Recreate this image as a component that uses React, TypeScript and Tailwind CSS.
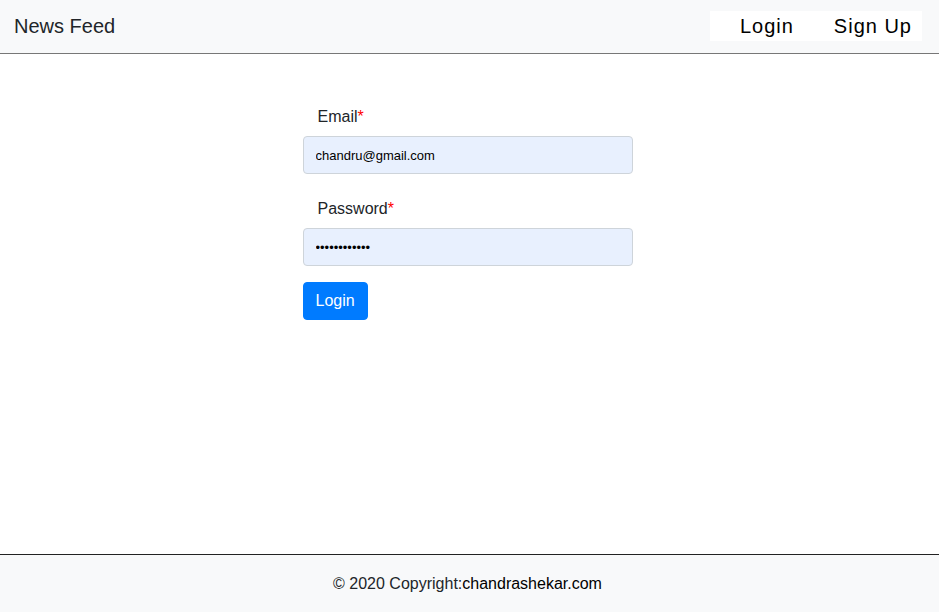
import React from 'react';

const App: React.FC = () => {
  return (
    <div className="min-h-screen flex flex-col bg-white text-[#212529]" style={{ fontFamily: '"Liberation Sans", Arial, sans-serif' }}>
      <nav className="h-[54px] bg-[#f8f9fa] border-b border-[#777777] flex items-center justify-between pl-[14px] pr-[17px] pb-[2px]">
        <span className="text-[20px] leading-[30px]">News Feed</span>
        <div className="bg-white h-[30px] flex items-center pl-[30px] pr-[10px] gap-[40px] text-[20px] tracking-[1px] text-black">
          <a href="#">Login</a>
          <a href="#">Sign Up</a>
        </div>
      </nav>

      <main className="flex-1 flex justify-center">
        <form className="w-[330px] mt-[51px] ml-[-4px]" onSubmit={e => e.preventDefault()}>
          <label className="block pl-[15px] text-[16px] leading-[24px] mb-[7px]">
            Email<span className="text-[#ff0000]">*</span>
          </label>
          <input
            type="email"
            defaultValue="chandru@gmail.com"
            className="block w-full h-[38px] px-[12px] bg-[#e8f0fe] border border-[#ced4da] rounded-[4px] text-[13px] text-black outline-none"
          />
          <label className="block pl-[15px] text-[16px] leading-[24px] mt-[23px] mb-[7px]">
            Password<span className="text-[#ff0000]">*</span>
          </label>
          <input
            type="password"
            defaultValue="123456789012"
            className="block w-full h-[38px] px-[12px] bg-[#e8f0fe] border border-[#ced4da] rounded-[4px] text-[13px] text-black outline-none"
          />
          <button
            type="submit"
            className="mt-[16px] h-[38px] px-[12px] bg-[#007bff] border border-[#007bff] rounded-[4px] text-white text-[16px]"
          >
            Login
          </button>
        </form>
      </main>

      <footer className="h-[58px] border-t border-[#222222] bg-[#f8f9fa] flex items-center justify-center pr-[4px] text-[16px]">
        <span>© 2020 Copyright:<a href="#" className="text-black">chandrashekar.com</a></span>
      </footer>
    </div>
  );
};

export default App;
